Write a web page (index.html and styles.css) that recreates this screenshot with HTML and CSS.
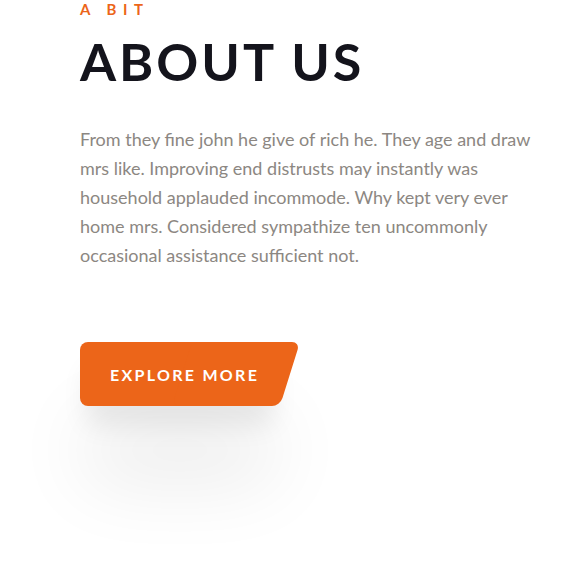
FILE: index.html
```html
<!DOCTYPE html>
<html>
<head>
<meta charset="utf-8">
<link rel="stylesheet" href="styles.css">
</head>
<body>
<section class="about">
  <p class="eyebrow">A BIT</p>
  <h1 class="title">ABOUT US</h1>
  <p class="text">From they fine john he give of rich he. They age and draw mrs like. Improving end distrusts may instantly was household applauded incommode. Why kept very ever home mrs. Considered sympathize ten uncommonly occasional assistance sufficient not.</p>
  <a class="btn" href="#"><span class="btn-shadow"></span><span class="btn-label">EXPLORE MORE</span></a>
</section>
</body>
</html>
```
FILE: styles.css
```css
html, body {
  margin: 0;
  padding: 0;
  background: #ffffff;
}
body {
  min-height: 587px;
}
.about {
  padding: 0 0 120px 80px;
  font-family: "Lato", "Liberation Sans", sans-serif;
  width: 460px;
}
.eyebrow {
  margin: 0;
  font-size: 15px;
  line-height: 18px;
  font-weight: 700;
  letter-spacing: 6.5px;
  color: #ec6519;
}
.title {
  margin: 17px 0 0;
  font-size: 52px;
  line-height: 52px;
  font-weight: 700;
  letter-spacing: 3px;
  color: #14141c;
}
.text {
  margin: 38px 0 0;
  font-size: 18px;
  line-height: 29px;
  color: #8c8782;
}
.btn {
  position: relative;
  z-index: 0;
  isolation: isolate;
  display: inline-flex;
  align-items: center;
  margin-top: 72px;
  width: 218px;
  height: 64px;
  text-decoration: none;
}
.btn-shadow {
  position: absolute;
  z-index: -1;
  left: 6px;
  top: 4px;
  width: 188px;
  height: 58px;
  border-radius: 12px;
  box-shadow: 0 22px 26px rgba(0,0,0,0.08), 0 75px 80px rgba(0,0,0,0.09);
}
.btn::before {
  content: "";
  position: absolute;
  left: 0; top: 0;
  width: 160px; height: 64px;
  background: #ec6519;
  border-radius: 8px 0 0 8px;
}
.btn::after {
  content: "";
  position: absolute;
  left: 102px; top: 0;
  width: 108px; height: 64px;
  background: #ec6519;
  border-radius: 8px;
  transform: skewX(-17.4deg);
}
.btn-label {
  position: relative;
  z-index: 1;
  padding-left: 30px;
  font-size: 16px;
  font-weight: 700;
  letter-spacing: 2.3px;
  color: #ffffff;
}
```
